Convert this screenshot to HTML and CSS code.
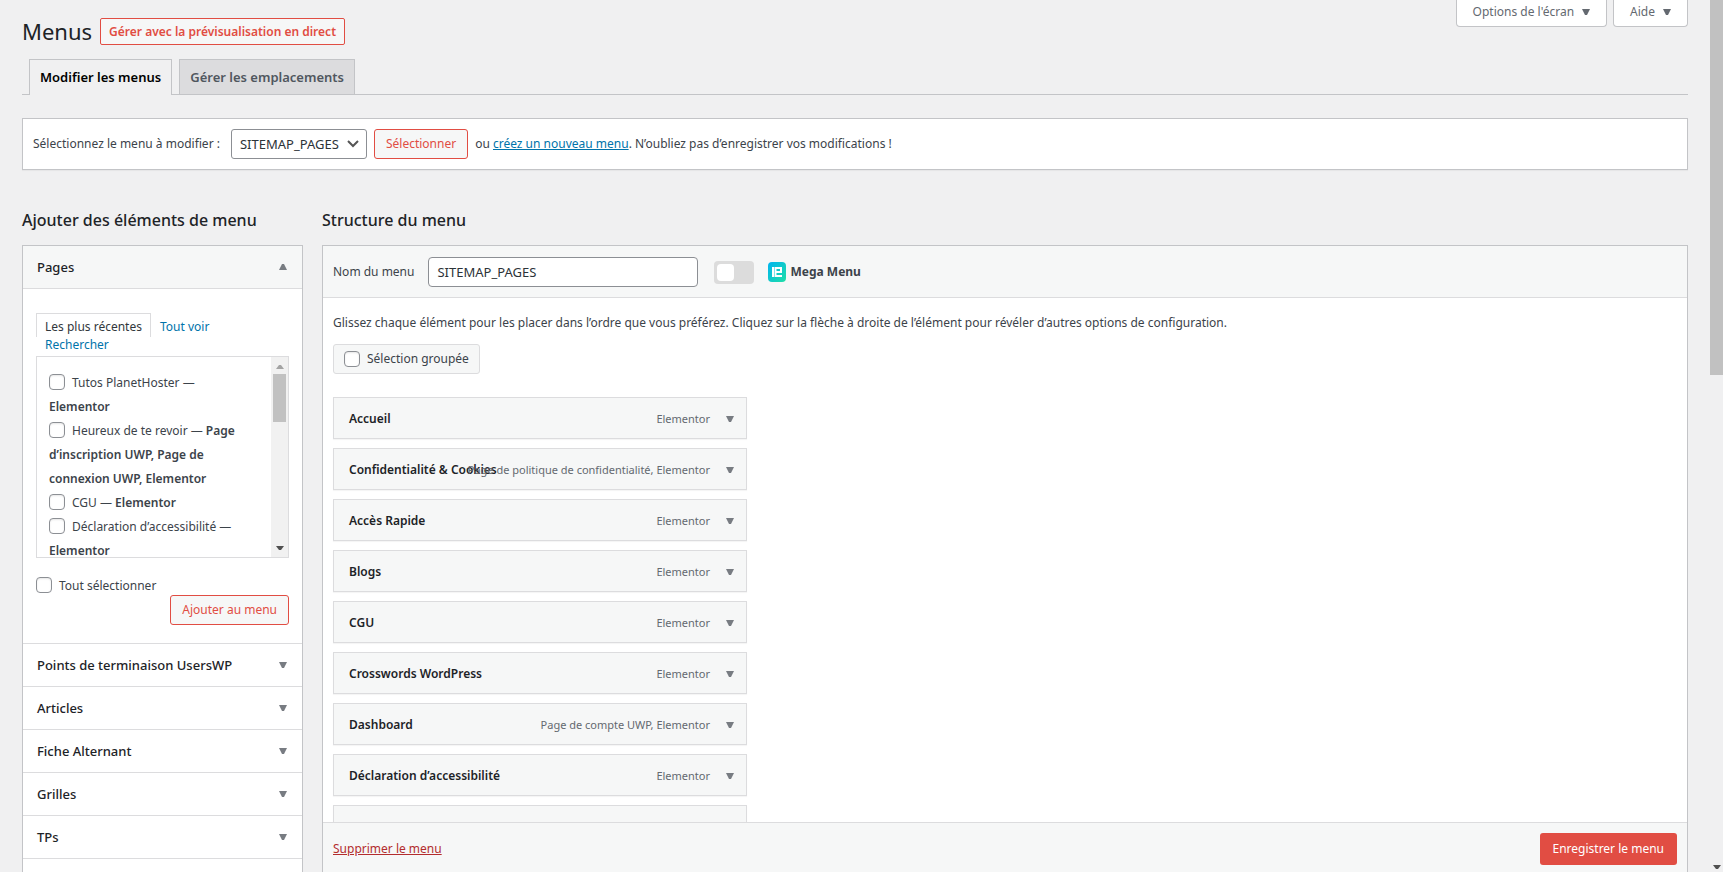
FILE: index.html
```html
<!DOCTYPE html>
<html lang="fr">
<head>
<meta charset="utf-8">
<title>Menus</title>
<meta name="viewport" content="width=device-width, initial-scale=1">
<link rel="stylesheet" href="styles.css">
</head>
<body>
<svg class="defs" aria-hidden="true">
  <symbol id="down" viewBox="0 0 8 6" preserveAspectRatio="none"><path d="M0 0h8L5 6H3z"/></symbol>
  <symbol id="up" viewBox="0 0 8 6" preserveAspectRatio="none"><path d="M0 6h8L5 0H3z"/></symbol>
</svg>
<div class="screen">
  <main class="wrap">
    <header class="top">
      <div class="heading">
        <h1>Menus</h1>
        <a class="title-action" href="#">Gérer avec la prévisualisation en direct</a>
      </div>
      <div class="meta-links">
        <button type="button">Options de l'écran <svg class="tri"><use href="#down"/></svg></button>
        <button type="button">Aide <svg class="tri"><use href="#down"/></svg></button>
      </div>
    </header>

    <nav class="nav-tabs">
      <a class="nav-tab active" href="#">Modifier les menus</a>
      <a class="nav-tab" href="#">Gérer les emplacements</a>
    </nav>

    <form class="manage">
      <label for="menu-select">Sélectionnez le menu à modifier :</label>
      <select id="menu-select"><option>SITEMAP_PAGES</option></select>
      <button class="btn" type="button">Sélectionner</button>
      <span class="hint">ou <a href="#">créez un nouveau menu</a>. N’oubliez pas d’enregistrer vos modifications !</span>
    </form>

    <div class="columns">
      <section class="side">
        <h2>Ajouter des éléments de menu</h2>
        <div class="accordion">
          <button class="acc-head open" type="button">Pages <svg class="tri"><use href="#up"/></svg></button>
          <div class="acc-body">
            <div class="mini-tabs">
              <a class="current" href="#">Les plus récentes</a>
              <a href="#">Tout voir</a>
              <a href="#">Rechercher</a>
            </div>
            <div class="picker">
              <ul>
                <li><label><input type="checkbox">Tutos PlanetHoster — <b>Elementor</b></label></li>
                <li><label><input type="checkbox">Heureux de te revoir — <b>Page d’inscription UWP, Page de connexion UWP, Elementor</b></label></li>
                <li><label><input type="checkbox">CGU — <b>Elementor</b></label></li>
                <li><label><input type="checkbox">Déclaration d’accessibilité — <b>Elementor</b></label></li>
              </ul>
              <div class="scroll">
                <svg class="arrow"><use href="#up"/></svg>
                <span class="thumb"></span>
                <svg class="arrow dark"><use href="#down"/></svg>
              </div>
            </div>
            <label class="all"><input type="checkbox">Tout sélectionner</label>
            <button class="btn add" type="button">Ajouter au menu</button>
          </div>
          <button class="acc-head" type="button">Points de terminaison UsersWP <svg class="tri"><use href="#down"/></svg></button>
          <button class="acc-head" type="button">Articles <svg class="tri"><use href="#down"/></svg></button>
          <button class="acc-head" type="button">Fiche Alternant <svg class="tri"><use href="#down"/></svg></button>
          <button class="acc-head" type="button">Grilles <svg class="tri"><use href="#down"/></svg></button>
          <button class="acc-head" type="button">TPs <svg class="tri"><use href="#down"/></svg></button>
        </div>
      </section>

      <section class="main">
        <h2>Structure du menu</h2>
        <div class="editor">
          <div class="editor-head">
            <label for="menu-name">Nom du menu</label>
            <input id="menu-name" type="text" value="SITEMAP_PAGES">
            <input id="mega" class="toggle" type="checkbox">
            <label class="mega" for="mega">
              <svg viewBox="0 0 18 20" width="18" height="20" aria-hidden="true">
                <defs><linearGradient id="g" x1="0" y1="0" x2="1" y2="1"><stop offset="0" stop-color="#00b4f0"/><stop offset="1" stop-color="#1fdfa6"/></linearGradient></defs>
                <rect width="18" height="20" rx="4" fill="url(#g)"/>
                <path d="M4 5h2v10H4z" fill="#fff"/>
                <path fill-rule="evenodd" d="M6.500 5H14v6H8.500v2H14v2H6.500zM8.500 7v2H12V7z" fill="#fff"/>
              </svg>
              Mega Menu
            </label>
          </div>
          <div class="editor-body">
            <p>Glissez chaque élément pour les placer dans l’ordre que vous préférez. Cliquez sur la flèche à droite de l’élément pour révéler d’autres options de configuration.</p>
            <label class="bulk"><input type="checkbox">Sélection groupée</label>
            <ul class="items">
              <li><span class="name">Accueil</span><span class="type">Elementor</span><svg class="tri"><use href="#down"/></svg></li>
              <li><span class="name">Confidentialité &amp; Cookies</span><span class="type">Page de politique de confidentialité, Elementor</span><svg class="tri"><use href="#down"/></svg></li>
              <li><span class="name">Accès Rapide</span><span class="type">Elementor</span><svg class="tri"><use href="#down"/></svg></li>
              <li><span class="name">Blogs</span><span class="type">Elementor</span><svg class="tri"><use href="#down"/></svg></li>
              <li><span class="name">CGU</span><span class="type">Elementor</span><svg class="tri"><use href="#down"/></svg></li>
              <li><span class="name">Crosswords WordPress</span><span class="type">Elementor</span><svg class="tri"><use href="#down"/></svg></li>
              <li><span class="name">Dashboard</span><span class="type">Page de compte UWP, Elementor</span><svg class="tri"><use href="#down"/></svg></li>
              <li><span class="name">Déclaration d’accessibilité</span><span class="type">Elementor</span><svg class="tri"><use href="#down"/></svg></li>
              <li></li>
            </ul>
          </div>
          <footer class="editor-foot">
            <a href="#">Supprimer le menu</a>
            <button class="primary" type="button">Enregistrer le menu</button>
          </footer>
        </div>
      </section>
    </div>
  </main>
  <div class="page-scroll"><span class="thumb"></span><svg class="arrow dark"><use href="#down"/></svg></div>
</div>
</body>
</html>
```
FILE: styles.css
```css
* { box-sizing: border-box; }
body {
  margin: 0;
  background: #f0f0f1;
  color: #3c434a;
  font: 12px/18px "Noto Sans", "Open Sans", sans-serif;
}
h1, h2, p, ul { margin: 0; padding: 0; }
ul { list-style: none; }
b { font-weight: 600; }
a { color: #0073aa; }
button, input, select { font: inherit; color: inherit; margin: 0; }
.defs { position: absolute; width: 0; height: 0; }
.screen { display: flex; height: 100vh; overflow: hidden; }
.wrap {
  flex: 1;
  min-width: 0;
  display: flex;
  flex-direction: column;
  padding: 0 22px;
}
.tri { width: 8px; height: 6px; fill: #787c82; flex: none; }

.top { display: flex; justify-content: space-between; align-items: flex-start; height: 59px; }
.heading { display: flex; align-items: center; gap: 8px; padding-top: 18px; }
h1 { font-size: 22px; line-height: 27px; font-weight: 400; color: #1d2327; }
.title-action {
  padding: 0 8px;
  border: 1px solid #e14d43;
  border-radius: 2px;
  background: #f6f7f7;
  color: #e14d43;
  font-weight: 600;
  line-height: 25px;
  text-decoration: none;
}
.meta-links { display: flex; gap: 6px; }
.meta-links button {
  display: flex;
  align-items: center;
  gap: 8px;
  height: 27px;
  padding: 0 16px 3px;
  border: 1px solid #c3c4c7;
  border-top: 0;
  border-radius: 0 0 4px 4px;
  background: #fff;
  color: #646970;
}
.meta-links .tri { fill: #646970; }

.nav-tabs { display: flex; gap: 7px; padding-left: 7px; border-bottom: 1px solid #c3c4c7; }
.nav-tab {
  padding: 5px 10px;
  border: 1px solid #c3c4c7;
  border-bottom: 0;
  background: #dcdcde;
  color: #50575e;
  font-size: 13px;
  font-weight: 600;
  line-height: 25px;
  height: 35px;
  text-decoration: none;
}
.nav-tab.active { height: 36px; margin-bottom: -1px; background: #f0f0f1; color: #000; }

.manage {
  display: flex;
  align-items: center;
  gap: 7px;
  margin-top: 23px;
  padding: 10px;
  border: 1px solid #c3c4c7;
  background: #fff;
  box-shadow: 0 1px 1px rgba(0, 0, 0, .04);
}
.manage label { margin-right: 4px; }
select {
  width: 136px;
  height: 30px;
  padding: 0 8px;
  border: 1px solid #8c8f94;
  border-radius: 3px;
  appearance: none;
  color: #2c3338;
  font-size: 13px;
  background: #fff url("data:image/svg+xml,%3Csvg xmlns='http://www.w3.org/2000/svg' viewBox='0 0 12 8'%3E%3Cpath d='M1 1l5 5 5-5' fill='none' stroke='%23555' stroke-width='2'/%3E%3C/svg%3E") no-repeat right 7px center / 12px 8px;
}
.btn {
  height: 30px;
  padding: 0 11px;
  border: 1px solid #e14d43;
  border-radius: 3px;
  background: #f6f7f7;
  color: #e14d43;
}

.columns { flex: 1; min-height: 0; display: flex; gap: 19px; margin-top: 37px; }
.side { width: 281px; flex: none; display: flex; flex-direction: column; }
.main { flex: 1; min-width: 0; display: flex; flex-direction: column; }
h2 { font-size: 16px; line-height: 26px; font-weight: 500; color: #1d2327; margin-bottom: 12px; }

.accordion { flex: 1; border: 1px solid #c3c4c7; border-bottom: 0; background: #fff; }
.acc-head {
  display: flex;
  align-items: center;
  justify-content: space-between;
  width: 100%;
  height: 43px;
  padding: 0 15px 0 14px;
  border: 0;
  border-bottom: 1px solid #dcdcde;
  background: #fff;
  color: #1d2327;
  font-size: 13px;
  font-weight: 500;
}
.acc-head.open { background: #f6f7f7; }
.acc-body {
  display: flex;
  flex-direction: column;
  align-items: flex-start;
  padding: 24px 13px 18px;
  border-bottom: 1px solid #dcdcde;
}
.mini-tabs { display: flex; flex-wrap: wrap; width: 100%; }
.mini-tabs a { padding: 4px 8px 0; border: 1px solid transparent; line-height: 18px; text-decoration: none; height: 24px; }
.mini-tabs a:last-child { padding: 0 8px; height: 19px; line-height: 16px; border-width: 0 1px; margin-right: 50%; }
.mini-tabs .current { border-color: #dcdcde; border-bottom: 0; color: #32373c; }
.picker { display: flex; width: 100%; height: 202px; border: 1px solid #dcdcde; overflow: hidden; }
.picker ul { flex: 1; padding: 14px 0 0 12px; line-height: 24px; }
.picker li { padding-right: 14px; }
.scroll { width: 17px; background: #f1f1f1; display: flex; flex-direction: column; align-items: center; padding: 8px 0 7px; }
.scroll .thumb { width: 13px; height: 48px; margin-top: 5px; background: #c1c1c1; }
.arrow { width: 8px; height: 4px; fill: #a3a3a3; }
.arrow.dark { margin-top: auto; fill: #505050; }
input[type="checkbox"]:not(.toggle) {
  appearance: none;
  width: 16px;
  height: 16px;
  margin: 0 7px 0 0;
  border: 1px solid #8c8f94;
  border-radius: 4px;
  background: #fff;
  box-shadow: inset 0 1px 2px rgba(0, 0, 0, .1);
  vertical-align: -3px;
}
.all { margin-top: 19px; line-height: 18px; }
.add { align-self: flex-end; }

.editor { flex: 1; min-height: 0; display: flex; flex-direction: column; border: 1px solid #c3c4c7; border-bottom: 0; background: #fff; }
.editor-head { display: flex; align-items: center; padding: 11px 10px 10px; border-bottom: 1px solid #dcdcde; background: #f6f7f7; }
#menu-name {
  width: 270px;
  height: 30px;
  margin: 0 16px 0 14px;
  padding: 0 8px;
  border: 1px solid #8c8f94;
  border-radius: 4px;
  background: #fff;
  color: #2c3338;
  font-size: 13px;
}
.toggle { appearance: none; width: 40px; height: 23px; padding: 3px; border-radius: 4px; background: #dcdcdc; }
.toggle::before { content: ""; display: block; width: 17px; height: 17px; border-radius: 4px; background: #fff; }
.mega { display: flex; align-items: center; gap: 4px; margin-left: 14px; font-weight: 700; }
.editor-body { flex: 1; min-height: 0; overflow: hidden; padding: 16px 10px 0; }
.bulk {
  display: inline-flex;
  align-items: center;
  height: 30px;
  margin-top: 12px;
  padding: 0 10px;
  border: 1px solid #dcdcde;
  border-radius: 3px;
  background: #f6f7f7;
}
.items { display: grid; gap: 9px; max-width: 414px; margin-top: 23px; }
.items li {
  display: grid;
  grid-template-columns: 1fr 8px;
  column-gap: 16px;
  align-items: center;
  height: 42px;
  padding: 1px 12px 0 15px;
  border: 1px solid #dcdcde;
  background: #f6f7f7;
  box-shadow: 0 1px 1px rgba(0, 0, 0, .04);
}
.name, .type { grid-area: 1 / 1; }
.name { font-weight: 600; color: #1d2327; }
.type { justify-self: end; color: #646970; font-size: 11px; }
.editor-foot { display: flex; align-items: center; justify-content: space-between; height: 50px; padding: 3px 10px 0; border-top: 1px solid #dcdcde; background: #f6f7f7; }
.editor-foot a { color: #b32d2e; }
.primary { height: 32px; padding: 0 13px; border: 0; border-radius: 3px; background: #e14d43; color: #fff; }

.page-scroll { flex: none; width: 13px; display: flex; flex-direction: column; align-items: center; background: #f0f0f1; padding-bottom: 3px; }
.page-scroll .thumb { width: 100%; height: 43vh; background: #c1c1c1; }
```
